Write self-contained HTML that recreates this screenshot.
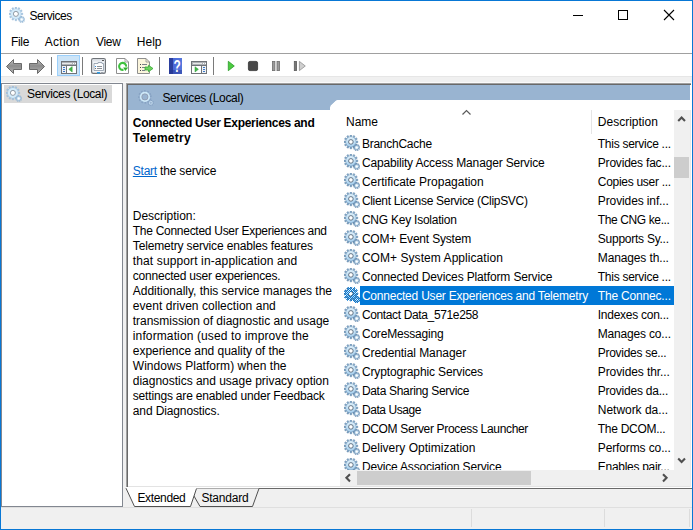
<!DOCTYPE html>
<html lang="en"><head><meta charset="utf-8"><title>Services</title>
<style>
html,body{margin:0;padding:0}
body{width:693px;height:530px;overflow:hidden;background:#f0f0f0;position:relative;font-family:"Liberation Sans",sans-serif;font-size:12px;color:#000}
.a{position:absolute}
.t{position:absolute;white-space:pre;line-height:14px;height:14px;font-size:12px}
.gear{position:absolute}
#list{position:absolute;left:330px;top:100px;width:344px;height:370px;background:#fff;overflow:hidden;clip-path:polygon(0 100%,0 8px,1px 5.500px,6px 0.700px,8px 0,100% 0,100% 100%)}
#list .t, #list .gear{margin-left:-330px;margin-top:-100px}
</style></head><body>
<svg width="0" height="0" style="position:absolute"><defs>
<linearGradient id="gg" x1="0" y1="0" x2="0" y2="1"><stop offset="0" stop-color="#8db0cf"/><stop offset="1" stop-color="#6f97bb"/></linearGradient>
<linearGradient id="gr" x1="0" y1="0" x2="0" y2="1"><stop offset="0" stop-color="#d6ebf8"/><stop offset="1" stop-color="#aed4f0"/></linearGradient>
<g id="gear">
 <path d="M6.14 1.96 L6.12 0.04 L7.68 0.04 L7.66 1.96 L8.72 2.24 L9.65 0.57 L11.01 1.36 L10.03 3.00 L10.80 3.77 L12.44 2.79 L13.23 4.15 L11.56 5.08 L11.84 6.14 L13.76 6.12 L13.76 7.68 L11.84 7.66 L11.56 8.72 L13.23 9.65 L12.44 11.01 L10.80 10.03 L10.03 10.80 L11.01 12.44 L9.65 13.23 L8.72 11.56 L7.66 11.84 L7.68 13.76 L6.12 13.76 L6.14 11.84 L5.08 11.56 L4.15 13.23 L2.79 12.44 L3.77 10.80 L3.00 10.03 L1.36 11.01 L0.57 9.65 L2.24 8.72 L1.96 7.66 L0.04 7.68 L0.04 6.12 L1.96 6.14 L2.24 5.08 L0.57 4.15 L1.36 2.79 L3.00 3.77 L3.77 3.00 L2.79 1.36 L4.15 0.57 L5.08 2.24 Z" fill="url(#gg)" stroke="#5d84a9" stroke-width="0.5"/>
 <circle cx="6.9" cy="6.9" r="3.6" fill="none" stroke="url(#gr)" stroke-width="2.6"/>
 <circle cx="6.9" cy="6.9" r="2.3" fill="#fff" stroke="#5b6b7c" stroke-width="0.9"/>
 <path d="M12.30 10.44 L12.20 9.24 L13.20 9.24 L13.10 10.44 L13.72 10.66 L14.41 9.68 L15.18 10.33 L14.33 11.18 L14.66 11.75 L15.82 11.44 L16.00 12.43 L14.80 12.54 L14.69 13.18 L15.78 13.69 L15.27 14.57 L14.28 13.88 L13.78 14.30 L14.29 15.39 L13.34 15.74 L13.03 14.57 L12.37 14.57 L12.06 15.74 L11.11 15.39 L11.62 14.30 L11.12 13.88 L10.13 14.57 L9.62 13.69 L10.71 13.18 L10.60 12.54 L9.40 12.43 L9.58 11.44 L10.74 11.75 L11.07 11.18 L10.22 10.33 L10.99 9.68 L11.68 10.66 Z" fill="#7fa3c4" stroke="#5d84a9" stroke-width="0.4"/>
 <circle cx="12.700" cy="12.500" r="1.500" fill="#fff" stroke="#c3def0" stroke-width="0.8"/>
</g>
<pattern id="dith" width="2" height="2" patternUnits="userSpaceOnUse"><rect x="0" y="0" width="1" height="1" fill="#0078d7"/><rect x="1" y="1" width="1" height="1" fill="#0078d7"/></pattern>
<filter id="wh" x="0" y="0" width="1" height="1"><feColorMatrix type="matrix" values="0 0 0 0 1  0 0 0 0 1  0 0 0 0 1  0 0 0 3 0"/></filter>
<mask id="gm" maskUnits="userSpaceOnUse" x="0" y="0" width="16" height="16"><g filter="url(#wh)"><use href="#gear"/><circle cx="6.9" cy="6.9" r="5"/></g><circle cx="6.9" cy="6.9" r="1.9" fill="#000"/></mask>
<g id="gearB">
 <circle cx="6.9" cy="6.9" r="5.9" fill="none" stroke="#86a2c3" stroke-width="1.8" stroke-dasharray="1.5 1.589" transform="rotate(-14 6.9 6.9)"/>
 <circle cx="6.9" cy="6.9" r="4.15" fill="none" stroke="#cde8f8" stroke-width="1.9"/>
 <circle cx="6.9" cy="6.9" r="3.1" fill="none" stroke="#8d8f9e" stroke-width="0.6"/>
 <circle cx="12.8" cy="12.8" r="2.5" fill="none" stroke="#86a2c3" stroke-width="1.3" stroke-dasharray="1 0.963"/>
 <circle cx="12.8" cy="12.8" r="1.5" fill="none" stroke="#c3daee" stroke-width="0.9"/>
</g>
<g id="gearL">
 <path d="M6.14 1.96 L6.12 0.04 L7.68 0.04 L7.66 1.96 L8.72 2.24 L9.65 0.57 L11.01 1.36 L10.03 3.00 L10.80 3.77 L12.44 2.79 L13.23 4.15 L11.56 5.08 L11.84 6.14 L13.76 6.12 L13.76 7.68 L11.84 7.66 L11.56 8.72 L13.23 9.65 L12.44 11.01 L10.80 10.03 L10.03 10.80 L11.01 12.44 L9.65 13.23 L8.72 11.56 L7.66 11.84 L7.68 13.76 L6.12 13.76 L6.14 11.84 L5.08 11.56 L4.15 13.23 L2.79 12.44 L3.77 10.80 L3.00 10.03 L1.36 11.01 L0.57 9.65 L2.24 8.72 L1.96 7.66 L0.04 7.68 L0.04 6.12 L1.96 6.14 L2.24 5.08 L0.57 4.15 L1.36 2.79 L3.00 3.77 L3.77 3.00 L2.79 1.36 L4.15 0.57 L5.08 2.24 Z" fill="#a6c7e2" stroke="#8fb3d3" stroke-width="0.4"/>
 <circle cx="6.9" cy="6.9" r="3.7" fill="none" stroke="#d3ebfa" stroke-width="2.6"/>
 <circle cx="6.9" cy="6.9" r="2.5" fill="#fff" stroke="#7d8791" stroke-width="0.8"/>
 <path d="M12.30 10.44 L12.21 9.34 L13.19 9.34 L13.10 10.44 L13.72 10.66 L14.36 9.76 L15.11 10.39 L14.33 11.18 L14.66 11.75 L15.73 11.47 L15.90 12.43 L14.80 12.54 L14.69 13.18 L15.68 13.66 L15.19 14.51 L14.28 13.88 L13.78 14.30 L14.24 15.30 L13.32 15.64 L13.03 14.57 L12.37 14.57 L12.08 15.64 L11.16 15.30 L11.62 14.30 L11.12 13.88 L10.21 14.51 L9.72 13.66 L10.71 13.18 L10.60 12.54 L9.50 12.43 L9.67 11.47 L10.74 11.75 L11.07 11.18 L10.29 10.39 L11.04 9.76 L11.68 10.66 Z" fill="#9dbfdc" stroke="#86abcc" stroke-width="0.3"/>
 <circle cx="12.700" cy="12.500" r="1.400" fill="#fff" stroke="#cfe4f3" stroke-width="0.7"/>
</g>
</defs></svg>

<!-- title + menu + toolbar backgrounds -->
<div class="a" style="left:0;top:0;width:693px;height:76px;background:#fff"></div>
<div class="a" style="left:0;top:76px;width:693px;height:1px;background:#e6e6e6"></div>
<div class="a" style="left:0;top:53px;width:693px;height:1px;background:#a0a0a0"></div>
<div class="a" style="left:0;top:82px;width:693px;height:1px;background:#fafafa"></div>

<!-- title icon -->
<svg class="gear" style="left:9px;top:7px" width="16" height="16" viewBox="0 0 16 16"><use href="#gearL"/></svg>
<!-- caption buttons -->
<svg class="a" style="left:560px;top:0" width="133" height="31" viewBox="0 0 133 31" shape-rendering="crispEdges">
 <rect x="13" y="15" width="10" height="1" fill="#000"/>
 <rect x="58.5" y="10.5" width="9" height="9" fill="none" stroke="#000" stroke-width="1"/>
 <g shape-rendering="auto" stroke="#000" stroke-width="1.1"><path d="M104 10 L114 20 M114 10 L104 20"/></g>
</svg>

<!-- toolbar -->
<svg class="a" style="left:0;top:54px" width="330" height="23" viewBox="0 0 330 23">
 <defs>
  <linearGradient id="ag" x1="0" y1="0" x2="0" y2="1"><stop offset="0" stop-color="#c4c4c4"/><stop offset="0.45" stop-color="#8c8c8c"/><stop offset="1" stop-color="#b4b4b4"/></linearGradient>
  <linearGradient id="hg" x1="0" y1="0" x2="1" y2="0"><stop offset="0" stop-color="#2b3f9e"/><stop offset="0.28" stop-color="#2b3f9e"/><stop offset="0.3" stop-color="#4a68d8"/><stop offset="1" stop-color="#5577dd"/></linearGradient>
 </defs>
 <!-- back / forward -->
 <path d="M6.500 12.500 L13.500 5.500 V9.500 H21.500 V15.500 H13.500 V19.500 Z" fill="url(#ag)" stroke="#6a6a6a" stroke-width="1" stroke-linejoin="round"/>
 <path d="M44.500 12.500 L37.500 5.500 V9.500 H29.500 V15.500 H37.500 V19.500 Z" fill="url(#ag)" stroke="#6a6a6a" stroke-width="1" stroke-linejoin="round"/>
 <rect x="51" y="3" width="1" height="18" fill="#7a7a7a"/>
 <!-- show/hide tree (pressed) -->
 <rect x="57.500" y="1.500" width="22" height="20" fill="#cce4f7" stroke="#9cd0fb"/>
 <rect x="61.500" y="7.500" width="15" height="12" fill="#fff" stroke="#6f7378"/>
 <rect x="62" y="8" width="14" height="3" fill="#aeb2b6"/>
 <rect x="62" y="9" width="10" height="1" fill="#e8e8e8"/><rect x="73" y="9" width="1" height="1" fill="#fff"/><rect x="75" y="9" width="1" height="1" fill="#fff"/>
 <rect x="62" y="11" width="14" height="1" fill="#6f7378"/>
 <rect x="62" y="12" width="4" height="7" fill="#eef1f5"/>
 <rect x="66" y="11" width="1" height="8" fill="#6f7378"/>
 <rect x="63" y="13" width="2" height="1" fill="#3a78c8"/><rect x="63" y="15" width="2" height="1" fill="#3a78c8"/><rect x="63" y="17" width="2" height="1" fill="#3a78c8"/>
 <path d="M72.200 12.600 V18 L68.800 15.300 Z" fill="#43b649" stroke="#2f9e36" stroke-width="0.500"/>
 <rect x="82" y="3" width="1" height="18" fill="#7a7a7a"/>
 <!-- properties -->
 <rect x="91.600" y="4.600" width="13.800" height="14.800" rx="1.600" fill="#f2f5f8" stroke="#6f7378" stroke-width="1.200"/>
 <rect x="92.500" y="5.500" width="12" height="2" fill="#dfe4ea"/>
 <rect x="102" y="6" width="2" height="1" fill="#555"/>
 <path d="M94 9.500 H98 V8.500 H102 V9.500 H103.500 V16.500 H94 Z" fill="#fbfcfd" stroke="#8a97a6" stroke-width="0.800"/>
 <rect x="95" y="12" width="1" height="1" fill="#2f8fe0"/><rect x="97" y="12" width="5" height="1" fill="#8a8f96"/>
 <rect x="95" y="14" width="1" height="1" fill="#777"/><rect x="97" y="14" width="5" height="1" fill="#8a8f96"/>
 <rect x="97" y="18" width="3" height="1.500" fill="#2f9be3"/><rect x="101" y="18" width="2.500" height="1.500" fill="#9aa0a8"/>
 <!-- refresh -->
 <path d="M116.500 4.500 H125 L128.500 8 V19.500 H116.500 Z" fill="#fff" stroke="#8f8f8f"/>
 <path d="M125 4.500 V8 H128.500" fill="none" stroke="#8f8f8f" stroke-width="0.800"/>
 <path d="M123.500 15.780 A3.500 3.500 0 1 1 126.100 12.700" fill="none" stroke="#3fc13f" stroke-width="2.100"/>
 <path d="M123.200 13.600 L128.200 13.600 L125.300 17 Z" fill="#2fb02f"/>
 <!-- export -->
 <path d="M137.500 4.500 H146 L149.500 8 V19.500 H137.500 Z" fill="#fbf5dc" stroke="#8f8f8f"/>
 <path d="M146 4.500 V8 H149.500" fill="none" stroke="#8f8f8f" stroke-width="0.800"/>
 <rect x="140" y="10" width="1" height="1" fill="#444"/><rect x="142" y="10" width="5" height="1" fill="#7a8088"/>
 <rect x="140" y="13" width="1" height="1" fill="#444"/><rect x="142" y="13" width="3" height="1" fill="#7a8088"/>
 <rect x="140" y="16" width="1" height="1" fill="#444"/><rect x="142" y="16" width="3" height="1" fill="#7a8088"/>
 <path d="M145 13 H148.500 V11.300 L153 14.500 L148.500 17.700 V16 H145 Z" fill="#6fd35f" stroke="#35a835" stroke-width="0.800" stroke-linejoin="round"/>
 <rect x="159" y="3" width="1" height="18" fill="#7a7a7a"/>
 <!-- help -->
 <rect x="169" y="4" width="13" height="16" fill="url(#hg)"/>
 <rect x="169" y="16" width="13" height="4" fill="#24348c" opacity="0.450"/>
 <text transform="translate(177 17.800) scale(0.700 1)" x="0" y="0" font-family="'Liberation Sans',sans-serif" font-size="17" font-weight="700" fill="#fff" text-anchor="middle">?</text>
 <!-- action pane -->
 <rect x="191.500" y="7.500" width="15" height="12" fill="#fff" stroke="#6f7378"/>
 <rect x="192" y="8" width="14" height="3" fill="#aeb2b6"/>
 <rect x="193" y="9" width="9" height="1" fill="#e8e8e8"/><rect x="203" y="9" width="1" height="1" fill="#fff"/><rect x="205" y="9" width="1" height="1" fill="#fff"/>
 <rect x="192" y="11" width="14" height="1" fill="#6f7378"/>
 <rect x="202" y="12" width="4" height="7" fill="#eef1f5"/>
 <rect x="201" y="11" width="1" height="8" fill="#6f7378"/>
 <path d="M195 12.700 V18 L198.400 15.300 Z" fill="#43b649" stroke="#2f9e36" stroke-width="0.500"/>
 <rect x="203" y="13" width="2" height="1" fill="#3a78c8"/><rect x="203" y="15" width="2" height="1" fill="#3a78c8"/><rect x="203" y="17" width="2" height="1" fill="#3a78c8"/>
 <rect x="213" y="3" width="1" height="18" fill="#7a7a7a"/>
 <!-- start/stop/pause/restart -->
 <path d="M228.300 7.300 V16.700 L234.300 12 Z" fill="#4ccc40" stroke="#2a9a2a" stroke-width="0.800" stroke-linejoin="round"/>
 <rect x="248.400" y="7.400" width="9.200" height="9.200" rx="1.500" fill="#484848" stroke="#333" stroke-width="0.800"/>
 <rect x="272.400" y="7.400" width="2.500" height="9.200" fill="#9a9a9a" stroke="#6e6e6e" stroke-width="0.800"/><rect x="277" y="7.400" width="2.500" height="9.200" fill="#9a9a9a" stroke="#6e6e6e" stroke-width="0.800"/>
 <rect x="294.300" y="7.400" width="2.300" height="9.200" fill="#777" stroke="#5c5c5c" stroke-width="0.800"/>
 <path d="M299.400 7.400 V16.600 L305.300 12 Z" fill="#cfcfcf" stroke="#8f8f8f" stroke-width="0.800" stroke-linejoin="round"/>
</svg>

<!-- tree panel -->
<div class="a" style="left:1px;top:83px;width:120px;height:422px;background:#fff;border:1px solid #828790;box-sizing:content-box"></div>
<div class="a" style="left:4px;top:85px;width:108px;height:18px;background:#d9d9d9"></div>
<svg class="gear" style="left:6px;top:86px" width="16" height="16" viewBox="0 0 16 16"><use href="#gearL"/></svg>

<!-- right panel -->
<div class="a" style="left:126px;top:83px;width:566px;height:405px;background:#fff"></div>
<div class="a" style="left:126px;top:83px;width:565px;height:1px;background:#a0a0a0"></div>
<div class="a" style="left:126px;top:83px;width:1px;height:404px;background:#a0a0a0"></div>
<div class="a" style="left:127px;top:84px;width:564px;height:1px;background:#696969"></div>
<div class="a" style="left:127px;top:84px;width:1px;height:403px;background:#696969"></div>
<div class="a" style="left:128px;top:486px;width:563px;height:1px;background:#e3e3e3"></div>
<div class="a" style="left:690px;top:110px;width:1px;height:377px;background:#e9e9e9"></div>
<div class="a" style="left:197px;top:488px;width:495px;height:1px;background:#696969"></div>
<!-- blue band -->
<div class="a" style="left:128px;top:85px;width:562px;height:25px;background:#99b4d1"></div>
<svg class="gear" style="left:137.600px;top:90.100px" width="16" height="16" viewBox="0 0 16 16"><use href="#gearB"/></svg>

<!-- list -->
<div class="a" style="left:330px;top:100px;width:360px;height:12px;background:#fff;clip-path:polygon(0 100%,0 8px,1px 5.500px,6px 0.700px,8px 0,100% 0,100% 100%)"></div>
<div id="list">
 <div class="a" style="left:30px;top:186px;width:314px;height:19px;background:#0078d7"></div>
<svg class="gear" style="left:344px;top:135px" width="16" height="16" viewBox="0 0 16 16"><use href="#gear"/></svg>
<svg class="gear" style="left:344px;top:154px" width="16" height="16" viewBox="0 0 16 16"><use href="#gear"/></svg>
<svg class="gear" style="left:344px;top:173px" width="16" height="16" viewBox="0 0 16 16"><use href="#gear"/></svg>
<svg class="gear" style="left:344px;top:192px" width="16" height="16" viewBox="0 0 16 16"><use href="#gear"/></svg>
<svg class="gear" style="left:344px;top:211px" width="16" height="16" viewBox="0 0 16 16"><use href="#gear"/></svg>
<svg class="gear" style="left:344px;top:230px" width="16" height="16" viewBox="0 0 16 16"><use href="#gear"/></svg>
<svg class="gear" style="left:344px;top:249px" width="16" height="16" viewBox="0 0 16 16"><use href="#gear"/></svg>
<svg class="gear" style="left:344px;top:268px" width="16" height="16" viewBox="0 0 16 16"><use href="#gear"/></svg>
<svg class="gear" style="left:344px;top:287px" width="16" height="16" viewBox="0 0 16 16" shape-rendering="crispEdges"><use href="#gear"/><rect width="16" height="16" fill="url(#dith)" mask="url(#gm)"/></svg>
<svg class="gear" style="left:344px;top:306px" width="16" height="16" viewBox="0 0 16 16"><use href="#gear"/></svg>
<svg class="gear" style="left:344px;top:325px" width="16" height="16" viewBox="0 0 16 16"><use href="#gear"/></svg>
<svg class="gear" style="left:344px;top:344px" width="16" height="16" viewBox="0 0 16 16"><use href="#gear"/></svg>
<svg class="gear" style="left:344px;top:363px" width="16" height="16" viewBox="0 0 16 16"><use href="#gear"/></svg>
<svg class="gear" style="left:344px;top:382px" width="16" height="16" viewBox="0 0 16 16"><use href="#gear"/></svg>
<svg class="gear" style="left:344px;top:401px" width="16" height="16" viewBox="0 0 16 16"><use href="#gear"/></svg>
<svg class="gear" style="left:344px;top:420px" width="16" height="16" viewBox="0 0 16 16"><use href="#gear"/></svg>
<svg class="gear" style="left:344px;top:439px" width="16" height="16" viewBox="0 0 16 16"><use href="#gear"/></svg>
<svg class="gear" style="left:344px;top:458px" width="16" height="16" viewBox="0 0 16 16"><use href="#gear"/></svg>
<span class="t" style="left:361.9px;top:136.53px;letter-spacing:-0.247px;color:#000;">BranchCache</span>
<span class="t" style="left:597.8px;top:136.53px;letter-spacing:-0.272px;color:#000;">This service ...</span>
<span class="t" style="left:361.9px;top:155.53px;letter-spacing:-0.166px;color:#000;">Capability Access Manager Service</span>
<span class="t" style="left:597.8px;top:155.53px;letter-spacing:-0.202px;color:#000;">Provides fac...</span>
<span class="t" style="left:361.9px;top:174.53px;letter-spacing:-0.012px;color:#000;">Certificate Propagation</span>
<span class="t" style="left:597.8px;top:174.53px;letter-spacing:-0.292px;color:#000;">Copies user ...</span>
<span class="t" style="left:361.9px;top:193.53px;letter-spacing:-0.303px;color:#000;">Client License Service (ClipSVC)</span>
<span class="t" style="left:597.8px;top:193.53px;letter-spacing:-0.114px;color:#000;">Provides inf...</span>
<span class="t" style="left:361.9px;top:212.53px;letter-spacing:-0.231px;color:#000;">CNG Key Isolation</span>
<span class="t" style="left:597.8px;top:212.53px;letter-spacing:-0.384px;color:#000;">The CNG ke...</span>
<span class="t" style="left:361.9px;top:231.53px;letter-spacing:-0.193px;color:#000;">COM+ Event System</span>
<span class="t" style="left:597.8px;top:231.53px;letter-spacing:-0.249px;color:#000;">Supports Sy...</span>
<span class="t" style="left:361.9px;top:250.53px;letter-spacing:0.055px;color:#000;">COM+ System Application</span>
<span class="t" style="left:597.8px;top:250.53px;letter-spacing:-0.132px;color:#000;">Manages th...</span>
<span class="t" style="left:361.9px;top:269.53px;letter-spacing:-0.145px;color:#000;">Connected Devices Platform Service</span>
<span class="t" style="left:597.8px;top:269.53px;letter-spacing:-0.272px;color:#000;">This service ...</span>
<span class="t" style="left:361.9px;top:288.53px;letter-spacing:-0.212px;color:#fff;">Connected User Experiences and Telemetry</span>
<span class="t" style="left:597.8px;top:288.53px;letter-spacing:-0.183px;color:#fff;">The Connec...</span>
<span class="t" style="left:361.9px;top:307.53px;letter-spacing:-0.362px;color:#000;">Contact Data_571e258</span>
<span class="t" style="left:597.8px;top:307.53px;letter-spacing:-0.266px;color:#000;">Indexes con...</span>
<span class="t" style="left:361.9px;top:326.53px;letter-spacing:-0.181px;color:#000;">CoreMessaging</span>
<span class="t" style="left:597.8px;top:326.53px;letter-spacing:-0.183px;color:#000;">Manages co...</span>
<span class="t" style="left:361.9px;top:345.53px;letter-spacing:-0.067px;color:#000;">Credential Manager</span>
<span class="t" style="left:597.8px;top:345.53px;letter-spacing:-0.293px;color:#000;">Provides se...</span>
<span class="t" style="left:361.9px;top:364.53px;letter-spacing:-0.135px;color:#000;">Cryptographic Services</span>
<span class="t" style="left:597.8px;top:364.53px;letter-spacing:-0.092px;color:#000;">Provides thr...</span>
<span class="t" style="left:361.9px;top:383.53px;letter-spacing:-0.310px;color:#000;">Data Sharing Service</span>
<span class="t" style="left:597.8px;top:383.53px;letter-spacing:-0.220px;color:#000;">Provides da...</span>
<span class="t" style="left:361.9px;top:402.53px;letter-spacing:-0.427px;color:#000;">Data Usage</span>
<span class="t" style="left:597.8px;top:402.53px;letter-spacing:-0.031px;color:#000;">Network da...</span>
<span class="t" style="left:361.9px;top:421.53px;letter-spacing:-0.332px;color:#000;">DCOM Server Process Launcher</span>
<span class="t" style="left:597.8px;top:421.53px;letter-spacing:-0.281px;color:#000;">The DCOM...</span>
<span class="t" style="left:361.9px;top:440.53px;letter-spacing:0.011px;color:#000;">Delivery Optimization</span>
<span class="t" style="left:597.8px;top:440.53px;letter-spacing:-0.121px;color:#000;">Performs co...</span>
<span class="t" style="left:361.9px;top:459.53px;letter-spacing:-0.176px;color:#000;">Device Association Service</span>
<span class="t" style="left:597.8px;top:459.53px;letter-spacing:-0.291px;color:#000;">Enables pair...</span>
</div>
<!-- header sort arrow & divider -->
<svg class="a" style="left:461px;top:109px" width="11" height="7" viewBox="0 0 11 7"><path d="M1.500 5.500 L5.500 1.500 L9.500 5.500" fill="none" stroke="#5a5a5a" stroke-width="1.200"/></svg>
<div class="a" style="left:591px;top:110px;width:1px;height:24px;background:#e5e5e5"></div>

<!-- v scrollbar -->
<div class="a" style="left:674px;top:110px;width:16px;height:360px;background:#f0f0f0"></div>
<div class="a" style="left:674px;top:157px;width:15px;height:21px;background:#cdcdcd"></div>
<svg class="a" style="left:677px;top:115px" width="10" height="8" viewBox="0 0 10 8"><path d="M1.200 6 L4.600 2.500 L8 6" fill="none" stroke="#505050" stroke-width="2.100"/></svg>
<svg class="a" style="left:677px;top:456px" width="10" height="8" viewBox="0 0 10 8"><path d="M1.200 2.500 L4.600 6 L8 2.500" fill="none" stroke="#505050" stroke-width="2.100"/></svg>
<!-- h scrollbar -->
<div class="a" style="left:340px;top:470px;width:350px;height:16px;background:#f0f0f0"></div>
<div class="a" style="left:357px;top:471px;width:174px;height:14px;background:#cdcdcd"></div>
<svg class="a" style="left:344px;top:473px" width="8" height="10" viewBox="0 0 8 10"><path d="M6 1.200 L2.400 4.800 L6 8.400" fill="none" stroke="#505050" stroke-width="2.100"/></svg>
<svg class="a" style="left:661px;top:473px" width="8" height="10" viewBox="0 0 8 10"><path d="M2 1.200 L5.600 4.800 L2 8.400" fill="none" stroke="#505050" stroke-width="2.100"/></svg>

<!-- tabs -->
<svg class="a" style="left:120px;top:486px" width="160" height="23" viewBox="0 0 160 23">
 <path d="M69.700 2.500 L80 20.500 H132.500 L139 2.500" fill="#f0f0f0" stroke="#505050" stroke-width="1"/>
 <path d="M6 1 L6 2.500 L14.500 20.500 H70.500 L76.500 2.500 L76.500 1 Z" fill="#fff"/>
 <path d="M6 2.200 L14.500 20.500 H70.500 L76.500 2.500" fill="none" stroke="#505050" stroke-width="1"/>
</svg>

<!-- status bar -->
<div class="a" style="left:0;top:507px;width:693px;height:1px;background:#dfdfdf"></div>
<div class="a" style="left:471px;top:509px;width:1px;height:18px;background:#dcdcdc"></div>
<div class="a" style="left:604px;top:509px;width:1px;height:18px;background:#dcdcdc"></div>
<div class="a" style="left:689px;top:509px;width:1px;height:18px;background:#dcdcdc"></div>

<span class="t" style="left:29.6px;top:9.03px;letter-spacing:-0.477px;color:#000;">Services</span>
<span class="t" style="left:10.9px;top:34.53px;letter-spacing:-0.286px;color:#000;">File</span>
<span class="t" style="left:44.8px;top:34.53px;letter-spacing:0.257px;color:#000;">Action</span>
<span class="t" style="left:95.9px;top:34.53px;letter-spacing:-0.274px;color:#000;">View</span>
<span class="t" style="left:136.8px;top:34.53px;letter-spacing:0.003px;color:#000;">Help</span>
<span class="t" style="left:27.0px;top:87.03px;letter-spacing:-0.371px;color:#000;">Services (Local)</span>
<span class="t" style="left:162.4px;top:91.03px;letter-spacing:-0.308px;color:#000;">Services (Local)</span>
<span class="t" style="left:132.8px;top:116.03px;letter-spacing:-0.304px;color:#000;font-weight:700;">Connected User Experiences and</span>
<span class="t" style="left:132.8px;top:131.03px;letter-spacing:0.254px;color:#000;font-weight:700;">Telemetry</span>
<span class="t" style="left:132.8px;top:164.03px;letter-spacing:-0.249px;color:#0066cc;text-decoration:underline;">Start</span>
<span class="t" style="left:160.0px;top:164.03px;letter-spacing:-0.166px;color:#000;">the service</span>
<span class="t" style="left:132.8px;top:209.03px;letter-spacing:-0.030px;color:#000;">Description:</span>
<span class="t" style="left:132.8px;top:224.03px;letter-spacing:-0.281px;color:#000;">The Connected User Experiences and</span>
<span class="t" style="left:132.8px;top:239.03px;letter-spacing:-0.159px;color:#000;">Telemetry service enables features</span>
<span class="t" style="left:132.8px;top:254.03px;letter-spacing:0.123px;color:#000;">that support in-application and</span>
<span class="t" style="left:132.8px;top:269.03px;letter-spacing:-0.216px;color:#000;">connected user experiences.</span>
<span class="t" style="left:132.8px;top:284.03px;letter-spacing:-0.018px;color:#000;">Additionally, this service manages the</span>
<span class="t" style="left:132.8px;top:299.03px;letter-spacing:0.034px;color:#000;">event driven collection and</span>
<span class="t" style="left:132.8px;top:314.03px;letter-spacing:-0.029px;color:#000;">transmission of diagnostic and usage</span>
<span class="t" style="left:132.8px;top:329.03px;letter-spacing:0.122px;color:#000;">information (used to improve the</span>
<span class="t" style="left:132.8px;top:344.03px;letter-spacing:-0.043px;color:#000;">experience and quality of the</span>
<span class="t" style="left:132.8px;top:359.03px;letter-spacing:0.041px;color:#000;">Windows Platform) when the</span>
<span class="t" style="left:132.8px;top:374.03px;letter-spacing:-0.019px;color:#000;">diagnostics and usage privacy option</span>
<span class="t" style="left:132.8px;top:389.03px;letter-spacing:-0.181px;color:#000;">settings are enabled under Feedback</span>
<span class="t" style="left:132.8px;top:404.03px;letter-spacing:-0.120px;color:#000;">and Diagnostics.</span>
<span class="t" style="left:346.0px;top:114.53px;letter-spacing:-0.004px;color:#000;">Name</span>
<span class="t" style="left:597.8px;top:114.53px;letter-spacing:0.006px;color:#000;">Description</span>
<span class="t" style="left:137.4px;top:491.03px;letter-spacing:-0.340px;color:#000;">Extended</span>
<span class="t" style="left:201.4px;top:491.03px;letter-spacing:-0.200px;color:#000;">Standard</span>

<!-- window border -->
<div class="a" style="left:0;top:0;width:691px;height:528px;border:1px solid #0877d5;pointer-events:none"></div>
</body></html>
